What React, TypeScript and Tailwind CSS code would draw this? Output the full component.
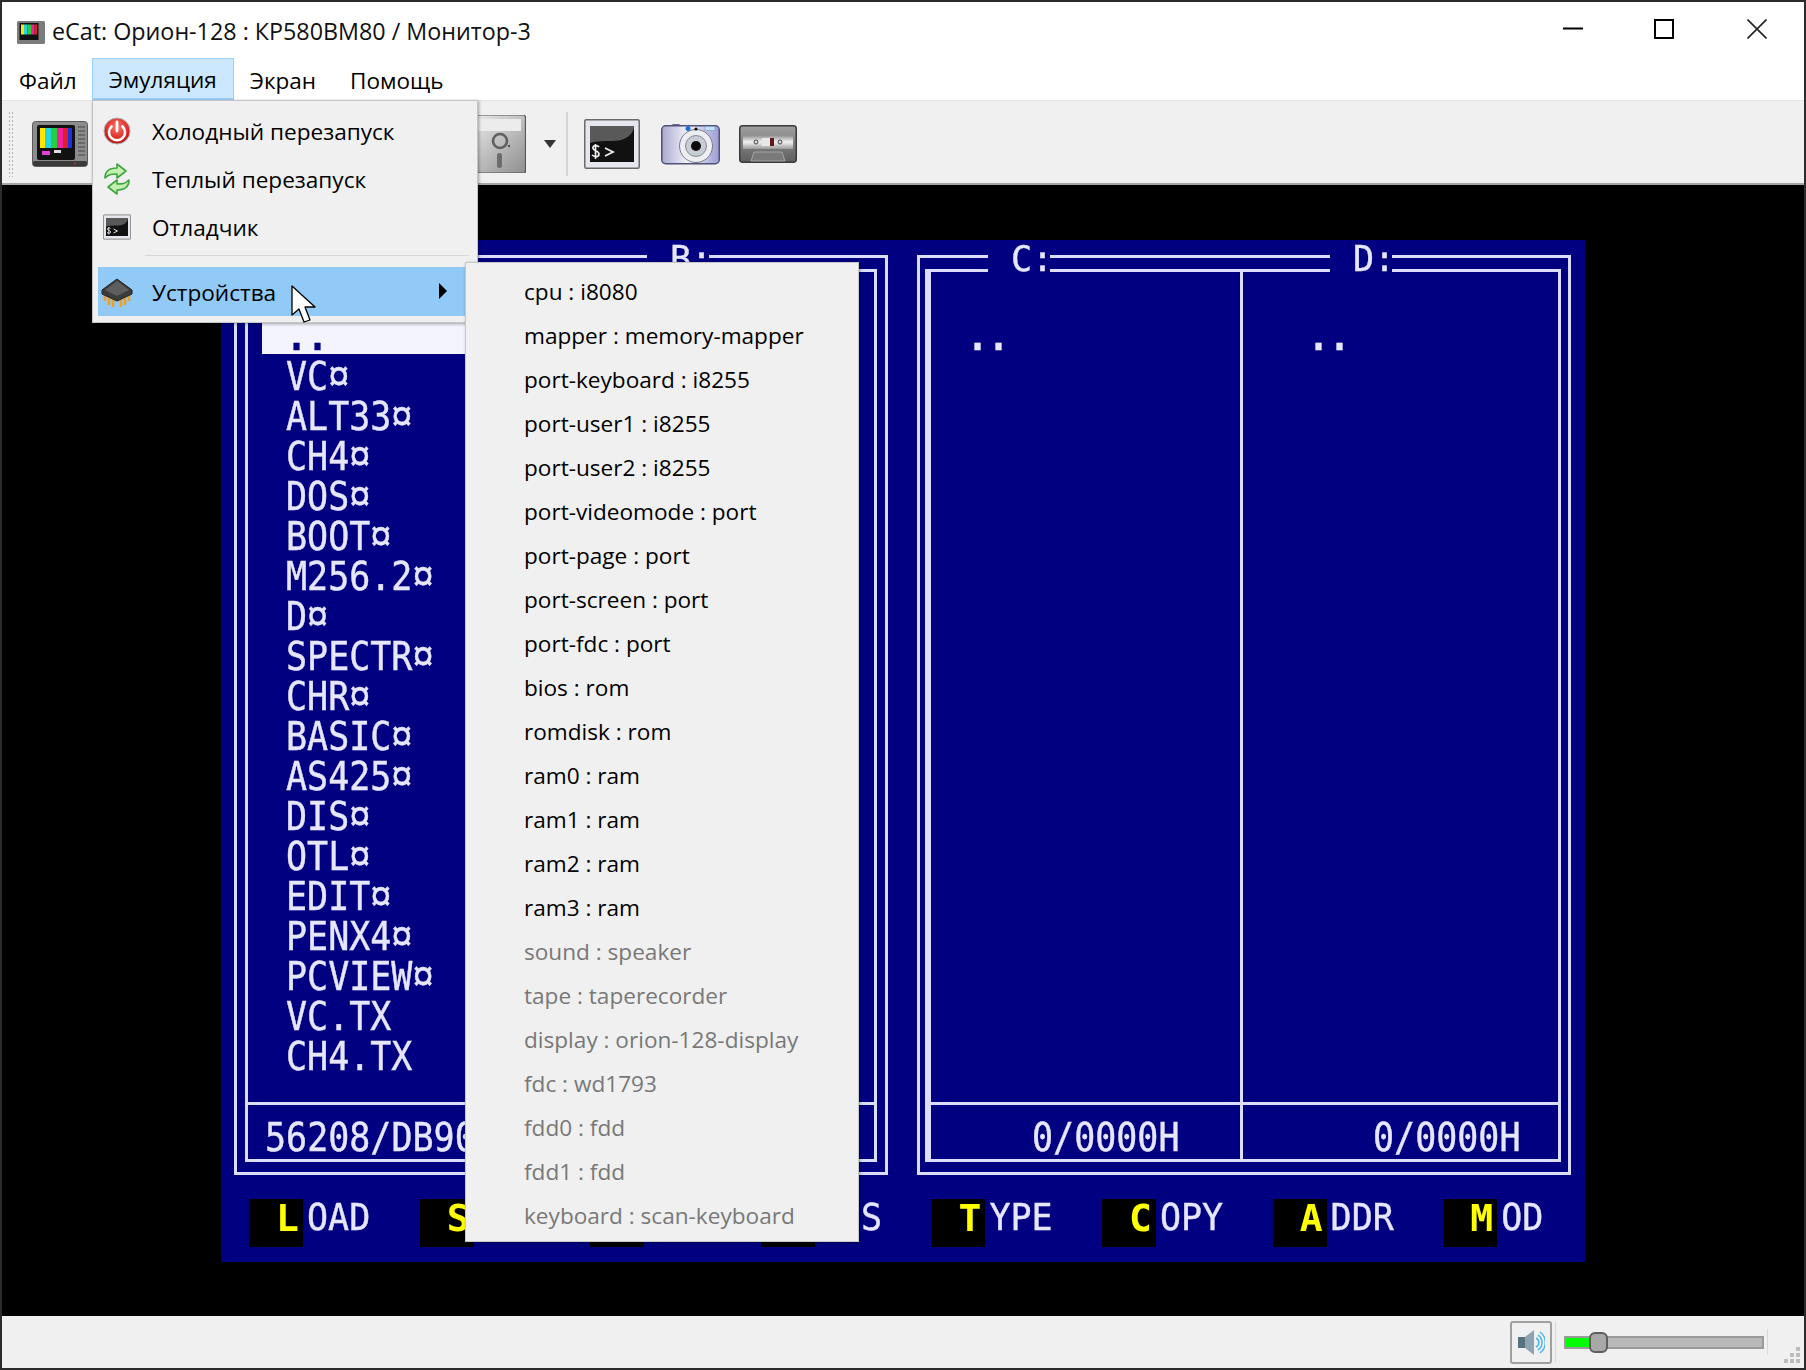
import React from "react";

const uiFont = "font-['Open_Sans','Noto_Sans',sans-serif]";
const crtFont = "font-['DejaVu_Sans_Mono','Liberation_Mono',monospace]";

const MonitorIcon = () => (
  <svg width="56" height="46" viewBox="0 0 56 46">
    <rect x="0.5" y="0.5" width="55" height="45" rx="3" fill="#8c8c8c" stroke="#5a5a5a" />
    <rect x="1" y="40" width="54" height="5" rx="1.5" fill="#3a3a3a" />
    <rect x="5" y="4" width="38" height="35" rx="2" fill="#111" />
    <rect x="8" y="7" width="5" height="20" fill="#ffe600" />
    <rect x="13" y="7" width="6" height="20" fill="#22d6e0" />
    <rect x="19" y="7" width="6" height="20" fill="#22d040" />
    <rect x="25" y="7" width="6" height="20" fill="#f020a0" />
    <rect x="31" y="7" width="5" height="20" fill="#e02020" />
    <rect x="36" y="7" width="4" height="20" fill="#2030e0" />
    <rect x="10" y="30" width="8" height="4" fill="#e040e0" />
    <rect x="22" y="29" width="7" height="3" fill="#ddd" />
    <path d="M46 6h7M46 10h7M46 14h7M46 18h7M46 22h7M46 26h7M46 30h7M46 34h7" stroke="#5f5f5f" strokeWidth="1.5" />
    <circle cx="43" cy="42.5" r="1" fill="#c03030" />
  </svg>
);

const PowerIcon = () => (
  <svg width="28" height="30" viewBox="0 0 28 30">
    <defs>
      <radialGradient id="pw" cx="50%" cy="35%" r="70%">
        <stop offset="0%" stopColor="#ff7a70" />
        <stop offset="70%" stopColor="#d8201c" />
        <stop offset="100%" stopColor="#9c1210" />
      </radialGradient>
    </defs>
    <circle cx="14" cy="15" r="13" fill="url(#pw)" stroke="#b0b0b0" strokeWidth="1" />
    <path d="M8.5 10.5a8 8 0 1 0 11 0" fill="none" stroke="#fff" strokeWidth="2.6" strokeLinecap="round" />
    <path d="M14 6v9" stroke="#fff" strokeWidth="2.8" strokeLinecap="round" />
  </svg>
);

const RefreshIcon = () => (
  <svg width="30" height="34" viewBox="0 0 30 34">
    <path d="M3 16c0-7 5-10 12-10V2l9 7-9 7v-4c-5 0-8 0-12 4z" fill="#c4efb0" stroke="#3ea63e" strokeWidth="1.6" strokeLinejoin="round" />
    <path d="M27 18c0 7-5 10-12 10v4l-9-7 9-7v4c5 0 8 0 12-4z" fill="#c4efb0" stroke="#3ea63e" strokeWidth="1.6" strokeLinejoin="round" />
  </svg>
);

const TerminalIcon = ({ w, h }: { w: number; h: number }) => (
  <svg width={w} height={h} viewBox="0 0 56 50">
    <rect x="0.75" y="0.75" width="54.5" height="48.5" rx="1.5" fill="#e6e6ee" stroke="#6a6a6a" strokeWidth="1.5" />
    <rect x="6" y="7" width="44" height="36" fill="#111" />
    <path d="M6 7h44v2c-3 10-12 13-22 13-8 0-16 0-22 2z" fill="#8a8a8a" opacity="0.6" />
    <path d="M15 28c-2-2.5-7-1.5-6 1.5s6 2 6 5.5-5 3-7 1M11.5 25v15" fill="none" stroke="#eee" strokeWidth="1.7" />
    <path d="M21 29l8 4-8 4" fill="none" stroke="#eee" strokeWidth="1.8" />
  </svg>
);

const ChipIcon = () => (
  <svg width="32" height="30" viewBox="0 0 32 30">
    <path d="M4 16v6M8 18v8M12 20v8M20 20v8M24 18v8M28 16v6" stroke="#f0a020" strokeWidth="2.6" strokeLinecap="round" />
    <path d="M16 1l15 11v4l-15 7-15-7v-4z" fill="#3c3c3c" stroke="#222" />
    <path d="M16 3l12 9-12 6-12-6z" fill="#5e5e5e" />
  </svg>
);

const FloppyIcon = () => (
  <svg width="60" height="58" viewBox="0 0 60 58">
    <defs>
      <linearGradient id="fl" x1="0" y1="0" x2="1" y2="1">
        <stop offset="0%" stopColor="#f2f2f2" />
        <stop offset="100%" stopColor="#8e8e8e" />
      </linearGradient>
    </defs>
    <path d="M0 0h58l1.5 1.5V57l-1.5 1H0z" fill="url(#fl)" stroke="#555" strokeWidth="1.2" />
    <rect x="0" y="4" width="55" height="12" fill="#ececec" />
    <circle cx="34" cy="26" r="7" fill="none" stroke="#606060" strokeWidth="2.6" />
    <circle cx="43" cy="31" r="1.2" fill="#555" />
    <rect x="31" y="38" width="5" height="15" rx="2.5" fill="#6c6c6c" />
  </svg>
);

const CameraIcon = () => (
  <svg width="59" height="42" viewBox="0 0 59 42">
    <defs>
      <linearGradient id="cam" x1="0" y1="0" x2="1" y2="0">
        <stop offset="0%" stopColor="#a8a8cc" />
        <stop offset="45%" stopColor="#f4f4ff" />
        <stop offset="100%" stopColor="#9c9cd4" />
      </linearGradient>
    </defs>
    <path d="M9 3l3-2h6l3 2" fill="#6a6a8a" />
    <rect x="0.75" y="2.75" width="57.5" height="38" rx="4" fill="url(#cam)" stroke="#50507a" strokeWidth="1.5" />
    <circle cx="35" cy="23" r="16.5" fill="#eceef2" stroke="#7a7a8a" />
    <circle cx="35" cy="23" r="10.5" fill="#c8ccd4" stroke="#8a8a9a" />
    <circle cx="35" cy="23" r="5" fill="#0c0c0c" />
    <circle cx="27" cy="5.5" r="2.5" fill="#1a6fe0" />
    <circle cx="35" cy="6" r="1.6" fill="#111" />
    <rect x="44" y="3.5" width="10" height="4" fill="#bfe2ff" stroke="#7a9ac0" strokeWidth="0.6" />
  </svg>
);

const TapeIcon = () => (
  <svg width="58" height="38" viewBox="0 0 58 38">
    <defs>
      <linearGradient id="tp" x1="0" y1="0" x2="0" y2="1">
        <stop offset="0%" stopColor="#a0a0a0" />
        <stop offset="100%" stopColor="#5e5e5e" />
      </linearGradient>
      <linearGradient id="tp2" x1="0" y1="0" x2="0" y2="1">
        <stop offset="0%" stopColor="#8a8a8a" />
        <stop offset="50%" stopColor="#f2f2f2" />
        <stop offset="100%" stopColor="#9a9a9a" />
      </linearGradient>
    </defs>
    <rect x="0.75" y="0.75" width="56.5" height="36.5" rx="3" fill="url(#tp)" stroke="#3a3a3a" strokeWidth="1.5" />
    <rect x="4" y="10" width="50" height="14" fill="url(#tp2)" />
    <circle cx="17" cy="17" r="2" fill="#ddd" stroke="#444" />
    <circle cx="41" cy="17" r="2" fill="#ddd" stroke="#444" />
    <rect x="23" y="13" width="12" height="8" fill="#e8e8e8" />
    <rect x="31" y="13" width="4" height="8" fill="#601818" />
    <path d="M12 36l3-9h28l3 9z" fill="#7a7a7a" stroke="#c8c8c8" strokeWidth="0.6" />
  </svg>
);

const SpeakerIcon = () => (
  <svg width="28" height="28" viewBox="0 0 28 28">
    <rect x="1" y="9" width="7" height="11" fill="#5a7280" />
    <path d="M8 9l9-7v25l-9-7z" fill="#8ea4b2" />
    <path d="M19 10a5 5 0 0 1 0 9M21 7a9 9 0 0 1 0 15M23 4a13 13 0 0 1 0 21" fill="none" stroke="#4ab4ee" strokeWidth="1.5" />
  </svg>
);

const Cursor = () => (
  <svg width="26" height="39" viewBox="0 0 26 39">
    <path d="M1 1v29l7-6 5 13 6-2-5-13h10z" fill="#fff" stroke="#000" strokeWidth="1.3" strokeLinejoin="round" />
  </svg>
);

const FILES = ["..", "VC¤", "ALT33¤", "CH4¤", "DOS¤", "BOOT¤", "M256.2¤", "D¤", "SPECTR¤", "CHR¤", "BASIC¤", "AS425¤", "DIS¤", "OTL¤", "EDIT¤", "PENX4¤", "PCVIEW¤", "VC.TX", "CH4.TX"];

const DEVICES: [string, boolean][] = [
  ["cpu : i8080", true],
  ["mapper : memory-mapper", true],
  ["port-keyboard : i8255", true],
  ["port-user1 : i8255", true],
  ["port-user2 : i8255", true],
  ["port-videomode : port", true],
  ["port-page : port", true],
  ["port-screen : port", true],
  ["port-fdc : port", true],
  ["bios : rom", true],
  ["romdisk : rom", true],
  ["ram0 : ram", true],
  ["ram1 : ram", true],
  ["ram2 : ram", true],
  ["ram3 : ram", true],
  ["sound : speaker", false],
  ["tape : taperecorder", false],
  ["display : orion-128-display", false],
  ["fdc : wd1793", false],
  ["fdd0 : fdd", false],
  ["fdd1 : fdd", false],
  ["keyboard : scan-keyboard", false],
];

const KEYS: [string, string][] = [
  ["L", "OAD"],
  ["S", "AVE"],
  ["R", "UN"],
  ["P", "ASS"],
  ["T", "YPE"],
  ["C", "OPY"],
  ["A", "DDR"],
  ["M", "OD"],
];

const Line = ({ children, className = "" }: { children: React.ReactNode; className?: string }) => (
  <div className={`h-[40px] leading-[40px] text-[35px] whitespace-pre scale-y-[1.1] [-webkit-text-stroke:0.4px] ${className}`}>{children}</div>
);

const FileName = ({ name }: { name: string }) =>
  name.endsWith("¤") ? (
    <>
      {name.slice(0, -1)}
      <span className="inline-block w-[21px] text-center font-['Liberation_Sans',sans-serif] text-[38px] leading-[38px]">¤</span>
    </>
  ) : (
    <>{name}</>
  );

const Column = ({
  files,
  pad,
  footer,
  footerPad,
  first,
}: {
  files: string[];
  pad: string;
  footer: string;
  footerPad: string;
  first?: boolean;
}) => (
  <div className={`flex flex-col min-w-0 ${first ? "" : "border-l-[3px] border-[#dcdcff]"}`}>
    <div className={`h-[830px] pt-[45px] ${pad} relative`}>
      {first && <div className="absolute left-[14px] top-[51px] w-[286px] h-[31px] bg-[#f4f4ff]" />}
      <div className="relative">
        {files.map((f, i) => (
          <Line key={f} className={`${f === ".." ? "font-bold" : ""} ${first && i === 0 ? "text-[#000080]" : ""}`}>
            <FileName name={f} />
          </Line>
        ))}
      </div>
    </div>
    <div className={`border-t-[3px] border-[#dcdcff] pt-[13px] ${footerPad}`}>
      <Line>{footer}</Line>
    </div>
  </div>
);

const Label = ({ text, className }: { text: string; className: string }) => (
  <div className={`absolute top-[-19px] bg-[#000080] text-[35px] leading-[40px] pl-[23px] w-[62px] h-[38px] [-webkit-text-stroke:0.4px] ${className}`}>{text}</div>
);

const Panel = ({
  left,
  right,
  children,
  pad,
  cols,
}: {
  left: [string, string];
  right: [string, string];
  children: React.ReactNode;
  pad: string;
  cols: string;
}) => (
  <div className={`relative w-[654px] h-[920px] border-[3px] border-[#dcdcff] pt-[11px] pb-[10px] ${pad}`}>
    <div className={`h-full border-[3px] border-[#dcdcff] grid ${cols}`}>{children}</div>
    <Label text={left[0]} className={left[1]} />
    <Label text={right[0]} className={right[1]} />
  </div>
);

const Toolbar = () => (
  <div className="h-[85px] bg-[#f0f0f0] border-t border-[#e6e6e6] border-b-2 border-b-[#a6a6a6] flex items-center pt-[3px]">
    <div className="ml-[6px] w-[5px] h-[66px] bg-[radial-gradient(#b4b4b4_1px,transparent_1px)] bg-[length:3px_4px]" />
    <div className="ml-[19px]">
      <MonitorIcon />
    </div>
    <div className="ml-[378px]">
      <FloppyIcon />
    </div>
    <div className="ml-[18px] w-0 h-0 border-l-[6.5px] border-r-[6.5px] border-t-[8px] border-l-transparent border-r-transparent border-t-[#333]" />
    <div className="ml-[10px] w-[2px] h-[64px] bg-[#d4d4d4]" />
    <div className="ml-[16px]">
      <TerminalIcon w={56} h={50} />
    </div>
    <div className="ml-[21px]">
      <CameraIcon />
    </div>
    <div className="ml-[19px]">
      <TapeIcon />
    </div>
  </div>
);

const MenuRow = ({ icon, label, active }: { icon: React.ReactNode; label: string; active?: boolean }) => (
  <div className={`flex items-center mx-[5px] ${active ? "bg-[#91c9f7] h-[49px]" : "h-[48px]"}`}>
    <div className={`w-[37px] flex justify-center ${active ? "mt-[2px]" : "mb-[3px]"}`}>{icon}</div>
    <div className={`ml-[17px] text-[22.6px] text-black ${active ? "pt-[3px]" : ""}`}>{label}</div>
  </div>
);

export default function App() {
  return (
    <div className={`relative w-[1806px] h-[1370px] overflow-hidden flex flex-col bg-white border-2 border-[#2b2b2b] text-black ${uiFont}`}>
      <div className="h-[48px] flex bg-white shrink-0">
        <div className="flex items-center pt-[12px]">
          <div className="ml-[15px]">
            <svg width="28" height="23" viewBox="0 0 56 46">
              <rect x="0.5" y="0.5" width="55" height="45" rx="3" fill="#7c7c7c" stroke="#444" />
              <rect x="5" y="4" width="38" height="34" fill="#111" />
              <rect x="8" y="7" width="6" height="20" fill="#ffe600" />
              <rect x="14" y="7" width="7" height="20" fill="#22d6e0" />
              <rect x="21" y="7" width="7" height="20" fill="#22d040" />
              <rect x="28" y="7" width="7" height="20" fill="#f020a0" />
              <rect x="35" y="7" width="5" height="20" fill="#e02020" />
            </svg>
          </div>
          <div className="ml-[7px] text-[23.3px] leading-none text-[#111]">eCat: Орион-128 : КР580ВМ80 / Монитор-3</div>
        </div>
        <div className="ml-auto flex items-center h-full pt-[6px]">
          <svg className="mr-[71px]" width="20" height="20" viewBox="0 0 20 20"><path d="M0 9.5h20" stroke="#000" strokeWidth="2" /></svg>
          <svg className="mr-[73px]" width="20" height="20" viewBox="0 0 20 20"><rect x="1" y="1" width="18" height="18" fill="none" stroke="#000" strokeWidth="2" /></svg>
          <svg className="mr-[37px]" width="20" height="20" viewBox="0 0 20 20"><path d="M0.5 0.5l19 19M19.5 0.5l-19 19" stroke="#222" strokeWidth="1.6" /></svg>
        </div>
      </div>

      <div className="h-[50px] flex items-stretch bg-white shrink-0 text-[22.5px] pl-[1px]">
        <div className="px-[16px] flex items-center pt-[12px]">Файл</div>
        <div className="px-[16px] flex items-center bg-[#cce8ff] border border-[#99d1ff] border-b-2 ml-[-1px] mt-[8px] pt-[3px]">Эмуляция</div>
        <div className="px-[16px] flex items-center pt-[12px]">Экран</div>
        <div className="px-[16px] ml-[2px] flex items-center pt-[12px]">Помощь</div>
      </div>

      <Toolbar />

      <div className="flex-1 bg-black relative min-h-0">
        <div className={`absolute left-[219px] top-[55px] w-[1364px] h-[1022px] bg-[#000080] text-[#e6e6ff] blur-[0.5px] overflow-hidden ${crtFont}`}>
          <div className="flex gap-[29px] pl-[13px] pt-[15px]">
            <Panel left={["A:", "left-[68px]"]} right={["B:", "left-[410px]"]} pad="pl-[8px] pr-[8px]" cols="grid-cols-[312px_1fr]">
              <Column first files={FILES} pad="pl-[38px]" footer="56208/DB90" footerPad="pl-[17px]" />
              <Column files={[]} pad="pl-[37px]" footer="" footerPad="pl-[37px]" />
            </Panel>
            <Panel left={["C:", "left-[68px]"]} right={["D:", "left-[410px]"]} pad="pl-[5px] pr-[7px]" cols="grid-cols-[312px_1fr]">
              <Column files={[".."]} pad="pl-[36px]" footer="0/0000H" footerPad="pl-[101px]" />
              <Column files={[".."]} pad="pl-[65px]" footer="0/0000H" footerPad="pl-[130px]" />
            </Panel>
          </div>
          <div className="flex pl-[28px] mt-[24px]">
            {KEYS.map(([k, rest]) => (
              <div key={k} className="w-[170.6px] flex shrink-0">
                <div className="w-[54px] h-[48px] bg-black text-[#ffff00] font-bold text-right text-[38px] leading-[38px] pr-[4px]">{k}</div>
                <div className="pl-[4px] text-[35px] leading-[38px] scale-y-[1.05] [-webkit-text-stroke:0.4px]">{rest}</div>
              </div>
            ))}
          </div>
        </div>
      </div>

      <div className="h-[52px] bg-[#f0f0f0] flex items-center shrink-0">
        <div className="ml-[1508px] w-[42px] h-[43px] border-2 border-[#a0a0a0] rounded-[3px] flex items-center justify-center">
          <SpeakerIcon />
        </div>
        <div className="ml-[3px] w-px h-[40px] bg-[#d8d8d8]" />
        <div className="relative ml-[8px] w-[200px] h-[13px] bg-[#b8b8b8] border-2 border-[#9a9a9a]">
          <div className="h-full w-[24px] bg-[#00ff00]" />
          <div className="absolute left-[23px] top-[-6px] w-[19px] h-[21px] rounded-[6px] bg-[#a8a8a8] border-2 border-[#5e5e5e]" />
        </div>
        <div className="ml-[3px] w-px h-[26px] bg-[#d8d8d8]" />
        <div className="ml-auto mr-[2px] mt-[26px]">
          <svg width="18" height="16" viewBox="0 0 18 16">
            <g fill="#bdbdbd">
              <rect x="12" y="0" width="4" height="4" />
              <rect x="6" y="6" width="4" height="4" />
              <rect x="12" y="6" width="4" height="4" />
              <rect x="0" y="12" width="4" height="4" />
              <rect x="6" y="12" width="4" height="4" />
              <rect x="12" y="12" width="4" height="4" />
            </g>
          </svg>
        </div>
      </div>

      {/* Open dropdown */}
      <div className="absolute left-[90px] top-[98px] w-[386px] h-[223px] bg-[#f0f0f0] border border-[#c4c4c4] shadow-[1px_1px_3px_rgba(0,0,0,0.35)] pt-[7px]">
        <MenuRow icon={<PowerIcon />} label="Холодный перезапуск" />
        <MenuRow icon={<RefreshIcon />} label="Теплый перезапуск" />
        <MenuRow icon={<TerminalIcon w={28} h={26} />} label="Отладчик" />
        <div className="ml-[52px] mr-[8px] mt-[3px] mb-[11px] h-px bg-[#d8d8d8]" />
        <MenuRow active icon={<ChipIcon />} label="Устройства" />
      </div>

      {/* Submenu */}
      <div className="absolute left-[463px] top-[260px] w-[394px] h-[980px] bg-[#f0f0f0] border border-[#c8c8c8] shadow-[1px_1px_3px_rgba(0,0,0,0.35)] pt-[7px] pl-[58px]">
        {DEVICES.map(([t, on]) => (
          <div key={t} className={`h-[44px] leading-[44px] text-[22.6px] whitespace-nowrap ${on ? "text-black" : "text-[#787878]"}`}>
            {t}
          </div>
        ))}
      </div>

      <div className="absolute left-[437px] top-[281px] w-0 h-0 border-t-[8px] border-b-[8px] border-l-[8px] border-t-transparent border-b-transparent border-l-black" />

      <div className="absolute left-[289px] top-[283px]">
        <Cursor />
      </div>
    </div>
  );
}
